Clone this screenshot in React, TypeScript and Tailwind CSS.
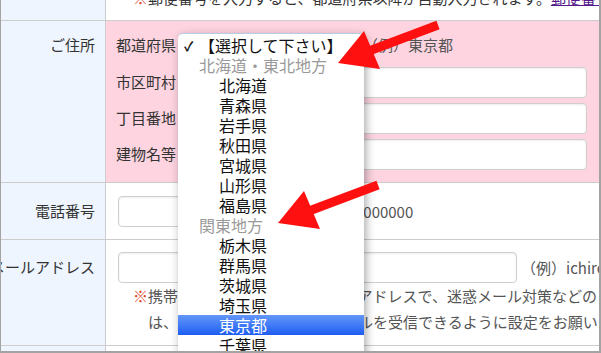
import React from 'react';

const FONT = { fontFamily: '"Noto Sans CJK JP", "Noto Sans", "DejaVu Sans", sans-serif' };

type Opt = { label: string; kind: 'head' | 'group' | 'item'; active?: boolean };

const OPTIONS: Opt[] = [
  { label: '【選択して下さい】', kind: 'head' },
  { label: '北海道・東北地方', kind: 'group' },
  { label: '北海道', kind: 'item' },
  { label: '青森県', kind: 'item' },
  { label: '岩手県', kind: 'item' },
  { label: '秋田県', kind: 'item' },
  { label: '宮城県', kind: 'item' },
  { label: '山形県', kind: 'item' },
  { label: '福島県', kind: 'item' },
  { label: '関東地方', kind: 'group' },
  { label: '栃木県', kind: 'item' },
  { label: '群馬県', kind: 'item' },
  { label: '茨城県', kind: 'item' },
  { label: '埼玉県', kind: 'item' },
  { label: '東京都', kind: 'item', active: true },
  { label: '千葉県', kind: 'item' },
  { label: '神奈川県', kind: 'item' },
];

const TextInput: React.FC<{ className?: string }> = ({ className = '' }) => (
  <div className={`h-[31px] bg-white border border-[#cfcfcf] rounded-[4px] shadow-[inset_0_1px_2px_rgba(0,0,0,0.08)] ${className}`} />
);

// the open <select> list, drawn over the form
const PrefDropdown: React.FC = () => (
  <div className="absolute left-[177px] top-[33px] w-[186px] h-[330px] bg-white rounded-t-[5px] border-t border-[#b9cbe6] shadow-[2px_3px_10px_rgba(0,0,0,0.35)] pt-px">
    {OPTIONS.map((o, i) => (
      <div
        key={i}
        className={`relative h-[20px] flex items-center text-[16px] leading-none whitespace-nowrap ${
          o.active
            ? 'bg-gradient-to-b from-[#6496f8] to-[#1d5cf2] text-white'
            : o.kind === 'group'
            ? 'text-[#9a9a9a]'
            : 'text-[#111]'
        } ${o.kind === 'item' ? 'pl-[41px]' : 'pl-[21px]'}`}
      >
        {o.kind === 'head' && <span className="absolute left-[6px] text-[13px] font-bold text-[#111]">✓</span>}
        {o.label}
      </div>
    ))}
  </div>
);

const Arrow: React.FC<{ dx: number; dy: number }> = ({ dx, dy }) => (
  <g transform={`translate(${dx} ${dy})`} fill="#ff1010" stroke="#ff1010">
    <line x1="437" y1="25" x2="368" y2="51" strokeWidth="9" />
    <polygon points="337,63 363,31 379,69" stroke="none" />
  </g>
);

export default function App() {
  return (
    <div
      className="relative w-[601px] h-[353px] overflow-hidden bg-white border-l border-r-2 border-b-2 border-[#a3a3a3] text-[15px] text-[#333]"
      style={FONT}
    >
      {/* notice row (scrolled off the top) */}
      <div className="flex h-[21px] border-b border-[#cccccc]">
        <div className="w-[105px] shrink-0 bg-[#eef5fe] border-r border-[#cccccc]" />
        <div className="flex-1 overflow-hidden">
          <div className="mt-[-14px] pl-[27px] leading-[24px] whitespace-nowrap">
            <span className="text-[#e0442a]">※</span>
            郵便番号を入力すると、都道府県以降が自動入力されます。
            <span className="text-[#551a8b] underline">郵便番号検索</span>
          </div>
        </div>
      </div>

      {/* address */}
      <div className="flex h-[162px] border-b border-[#cccccc]">
        <div className="w-[105px] shrink-0 bg-[#eef5fe] border-r border-[#cccccc] flex justify-end pr-[10px] pt-[12px]">
          <span className="leading-[24px]">ご住所</span>
        </div>
        <div className="flex-1 bg-[#fdd4df] pt-[12px] pl-[10px] pr-[12px] flex flex-col">
          <div className="flex items-center h-[24px]">
            <span className="w-[70px]">都道府県</span>
            <div className="w-[170px] h-[22px] bg-white border border-[#aaa] rounded-[4px]" />
            <span className="ml-[7px] text-[#555]">（例）東京都</span>
          </div>
          <div className="flex items-center mt-[10px]">
            <span className="w-[70px]">市区町村</span>
            <TextInput className="flex-1" />
          </div>
          <div className="flex items-center mt-[5px]">
            <span className="w-[70px]">丁目番地</span>
            <TextInput className="flex-1" />
          </div>
          <div className="flex items-center mt-[5px]">
            <span className="w-[70px]">建物名等</span>
            <TextInput className="flex-1" />
          </div>
        </div>
      </div>

      {/* phone */}
      <div className="flex h-[57px] border-b border-[#cccccc]">
        <div className="w-[105px] shrink-0 bg-[#eef5fe] border-r border-[#cccccc] flex justify-end pr-[10px] pt-[16px]">
          <span className="leading-[24px]">電話番号</span>
        </div>
        <div className="flex-1 pt-[13px] pl-[12px] flex items-start">
          <TextInput className="w-[163px]" />
          <span className="ml-[4px] leading-[31px] text-[#555] whitespace-nowrap">（例）0000000000</span>
        </div>
      </div>

      {/* mail */}
      <div className="flex h-[106px] border-b border-[#cccccc]">
        <div className="w-[105px] shrink-0 bg-[#eef5fe] border-r border-[#cccccc] flex justify-end pr-[10px] pt-[15px] overflow-hidden whitespace-nowrap">
          <span className="leading-[24px]">メールアドレス</span>
        </div>
        <div className="flex-1 min-w-0 pt-[12px] pl-[12px] overflow-hidden">
          <div className="flex items-start">
            <TextInput className="w-[399px] shrink-0" />
            <span className="ml-[4px] leading-[31px] text-[#555] whitespace-nowrap">（例）ichiro@example.com</span>
          </div>
          <div className="pl-[15px] leading-[26px] whitespace-nowrap text-[#555]">
            <div>
              <span className="text-[#e0442a]">※</span>携帯・スマートフォンのメールアドレスで、迷惑メール対策などの
            </div>
            <div className="pl-[15px]">は、当店のドメインからのメールを受信できるように設定をお願いいたします。</div>
          </div>
        </div>
      </div>

      {/* next row peeking in */}
      <div className="flex h-[5px]">
        <div className="w-[105px] shrink-0 bg-[#eef5fe] border-r border-[#cccccc]" />
        <div className="flex-1" />
      </div>

      <PrefDropdown />

      <svg className="absolute left-0 top-0 pointer-events-none" width="601" height="353" viewBox="0 0 601 353">
        <Arrow dx={0} dy={0} />
        <Arrow dx={-60} dy={160} />
      </svg>
    </div>
  );
}
